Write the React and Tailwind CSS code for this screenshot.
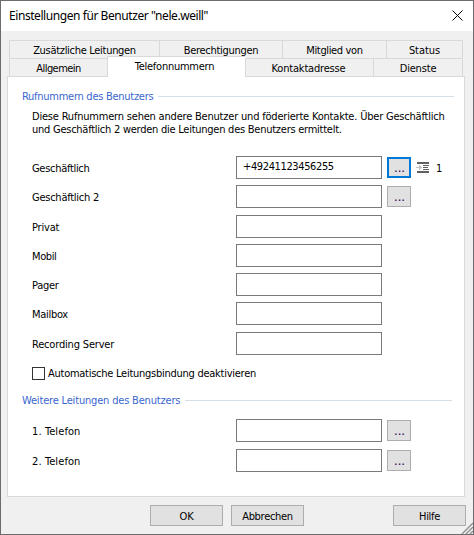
import React, { useState } from 'react';
import clsx from 'clsx';

const backTabs = [
  { label: 'Zusätzliche Leitungen', width: 'w-[150px]', tracking: 'tracking-[-0.3px]' },
  { label: 'Berechtigungen', width: 'w-[123px]', tracking: 'tracking-[-0.28px]' },
  { label: 'Mitglied von', width: 'w-[104px]', tracking: 'tracking-[-0.35px]' },
  { label: 'Status', width: 'w-[77px] border-r', tracking: 'tracking-[-0.05px]' },
];

const userNumbers = [
  { label: 'Geschäftlich', value: '+49241123456255', browse: true, focused: true, order: '1', tracking: 'tracking-[-0.3px]' },
  { label: 'Geschäftlich 2', browse: true, tracking: 'tracking-[-0.25px]', gap: 'mt-1.5' },
  { label: 'Privat', gap: 'mt-[7px]' },
  { label: 'Mobil', tracking: 'tracking-[-0.4px]', gap: 'mt-1.5' },
  { label: 'Pager', tracking: 'tracking-[-0.3px]', gap: 'mt-1.5' },
  { label: 'Mailbox', tracking: 'tracking-[-0.3px]', gap: 'mt-1.5' },
  { label: 'Recording Server', gap: 'mt-[7px]' },
];

const moreLines = [
  { label: '1. Telefon', browse: true, tracking: 'tracking-[0.1px]' },
  { label: '2. Telefon', browse: true, tracking: 'tracking-[0.1px]', gap: 'mt-[7px]' },
];

const IndentIcon = () => (
  <svg width="14" height="11" viewBox="0 0 14 11" shapeRendering="crispEdges" className="ml-[5px] shrink-0">
    <path d="M1 0h12v2H1zM7 3h6v1H7zM7 5h5v1H7zM7 7h4v1H7zM1 9h12v2H1z" fill="#606060" />
    <path d="M0 5h3V3h1v1h1v1h1v1H5v1H4v1H3V6H0z" fill="#c4c4c4" />
    <path d="M11 7h2v1h-2z" fill="#606060" />
  </svg>
);

const Tab = ({ label, width, tracking }) => (
  <div className={clsx('h-[18px] shrink-0 border-t border-l border-[#d9d9d9] text-center leading-[19px]', width, tracking)}>
    {label}
  </div>
);

const SectionTitle = ({ children, className }) => (
  <div className={clsx('flex h-[13px] items-center gap-[5px] pl-[14px] text-[#3a66d0]', className)}>
    <h2 className="shrink-0 whitespace-nowrap">{children}</h2>
    <div className="h-px flex-1 bg-[#d5dfe5]" />
  </div>
);

const NumberRow = ({ label, value = '', browse, focused, order, gap, tracking = 'tracking-[-0.18px]' }) => {
  const [number, setNumber] = useState(value);

  return (
    <div className={clsx('flex h-[23px] items-center pl-6', gap)}>
      <label className={clsx('w-[204px] shrink-0 pt-[2px]', tracking)}>{label}</label>
      <input
        type="text"
        value={number}
        onChange={(e) => setNumber(e.target.value)}
        className="h-[23px] w-[146px] shrink-0 border border-[#7a7a7a] bg-white px-[6px] pb-[2px] tracking-[-0.38px] outline-none"
      />
      {browse && (
        <button
          className={clsx(
            'ml-[5px] h-[21px] w-6 shrink-0 bg-[#e1e1e1] pl-px text-[13px] tracking-[-0.1px] text-[#16004a]',
            focused ? 'border-2 border-[#0078d7] leading-[18px]' : 'border border-[#adadad] leading-[20px]'
          )}
        >
          ...
        </button>
      )}
      {order && <IndentIcon />}
      {order && <span className="ml-[6px] pt-[2px]">{order}</span>}
    </div>
  );
};

const DialogButton = ({ children, className }) => (
  <button className={clsx('h-[21px] w-[73px] shrink-0 border border-[#adadad] bg-[#e1e1e1] leading-[21px]', className)}>
    {children}
  </button>
);

const App = () => {
  const [noBinding, setNoBinding] = useState(false);

  return (
    <div className="relative flex h-[535px] w-[474px] flex-col overflow-hidden border border-[#6d6b6d] bg-[#f0f0f0] font-['DejaVu_Sans_Condensed','DejaVu_Sans',sans-serif] text-[11px] leading-[13px] tracking-[-0.18px] text-black">
      <header className="flex h-[30px] shrink-0 items-center justify-between bg-white pr-[10px] pb-px pl-2">
        <h1 className="font-['Noto_Sans',sans-serif] text-[12px] tracking-[-0.43px]">Einstellungen für Benutzer "nele.weill"</h1>
        <svg width="11" height="11" viewBox="0 0 11 11" fill="none" stroke="#000" strokeWidth="1">
          <path d="M.5.5l10 10M10.5.5l-10 10" />
        </svg>
      </header>

      <nav className="mt-[9px] ml-2 shrink-0">
        <div className="flex">
          {backTabs.map(tab => (
            <Tab key={tab.label} {...tab} />
          ))}
        </div>
        <div className="flex">
          <Tab label="Allgemein" width="w-[98px]" tracking="tracking-[-0.55px]" />
          <div className="relative z-10 -mt-[2px] -mb-px h-[21px] w-[138px] border-t border-l border-[#d9d9d9] bg-white pr-1 text-center leading-[20px] tracking-[-0.25px]">
            Telefonnummern
          </div>
          <Tab label="Kontaktadresse" width="w-[128px] pr-[2px]" />
          <Tab label="Dienste" width="w-[90px] border-r" />
        </div>
      </nav>

      <main className="ml-[6px] flex h-[421px] w-[458px] shrink-0 flex-col border border-[#d9d9d9] bg-white">
        <SectionTitle className="mt-[13px] mr-[10px] tracking-[-0.27px]">Rufnummern des Benutzers</SectionTitle>
        <p className="mt-[7px] h-[26px] pl-6 whitespace-nowrap">
          <span className="tracking-[-0.2px]">Diese Rufnummern sehen andere Benutzer und föderierte Kontakte. Über Geschäftlich</span>
          <br />
          <span className="tracking-[-0.25px]">und Geschäftlich 2 werden die Leitungen des Benutzers ermittelt.</span>
        </p>
        <div className="mt-5">
          {userNumbers.map(row => (
            <NumberRow key={row.label} {...row} />
          ))}
        </div>
        <label className="mt-3 flex h-[13px] items-center gap-[3px] pl-6">
          <input
            type="checkbox"
            checked={noBinding}
            onChange={(e) => setNoBinding(e.target.checked)}
            className="h-[13px] w-[13px] appearance-none border border-[#333] bg-white checked:bg-[#333]"
          />
          <span className="tracking-[-0.26px]">Automatische Leitungsbindung deaktivieren</span>
        </label>
        <SectionTitle className="mt-[14px] mr-3">Weitere Leitungen des Benutzers</SectionTitle>
        <div className="mt-3">
          {moreLines.map(row => (
            <NumberRow key={row.label} {...row} />
          ))}
        </div>
      </main>

      <footer className="mt-2 flex shrink-0 pl-[149px]">
        <DialogButton>OK</DialogButton>
        <DialogButton className="ml-2 tracking-[-0.3px]">Abbrechen</DialogButton>
        <DialogButton className="ml-[89px] tracking-[-0.3px]">Hilfe</DialogButton>
      </footer>

      <svg width="12" height="12" viewBox="0 0 12 12" className="absolute right-0 bottom-0" stroke="#8f8f8f" strokeWidth="1.4">
        <path d="M1 12L12 1M5 12l7-7M9 12l3-3" />
      </svg>
    </div>
  );
};

export default App;
